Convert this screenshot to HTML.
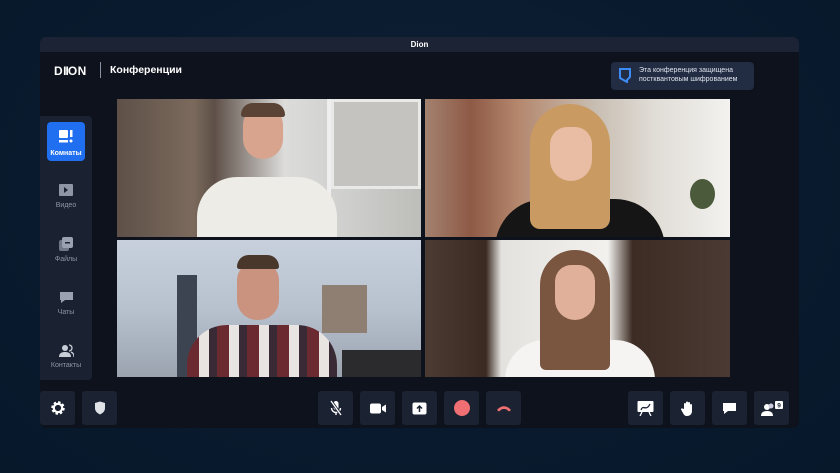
<!DOCTYPE html>
<html><head><meta charset="utf-8"><style>
*{margin:0;padding:0;box-sizing:border-box}
body{width:840px;height:473px;overflow:hidden;background:radial-gradient(ellipse at 50% 40%,#0e2036 0%,#0a1a2e 60%,#07182b 100%);font-family:"Liberation Sans","Noto Sans CJK SC",sans-serif;position:relative}
.win{position:absolute;left:40px;top:37px;width:759px;height:391px;background:#0e121c;border-radius:6px;overflow:hidden}
.title{height:15px;background:#1b2335;color:#fff;font-size:8px;font-weight:bold;text-align:center;line-height:15px}
.a{position:absolute}
.logo{left:14px;top:27px;color:#fff;font-weight:bold;font-size:12px;letter-spacing:0.5px}
.sep{left:60px;top:25px;width:1px;height:16px;background:#8891a0}
.conf{left:70px;top:27px;color:#fff;font-size:10.5px;font-weight:bold}
.badge{left:571px;top:25px;width:143px;height:28px;background:#222c42;border-radius:4px}
.badge span{position:absolute;left:28px;top:5px;color:#dfe5ee;font-size:7px;line-height:8.5px}
.side{left:0;top:79px;width:52px;height:264px;background:#1a2131;border-radius:0 4px 4px 0}
.si{position:absolute;left:0;width:52px;text-align:center;color:#8e96a6;font-size:7px}
.act{left:7px;top:6px;width:38px;height:39px;background:#1f6ff0;border-radius:4px}
.btn{position:absolute;top:354px;width:35px;height:34px;background:#1b2232;border-radius:3px;display:flex;align-items:center;justify-content:center}
.tile{position:absolute;overflow:hidden}
</style></head><body>
<div class="win">
<div class="title">Dion</div>
<div class="a logo">D<span style="letter-spacing:-1px">II</span>ON</div>
<div class="a sep"></div>
<div class="a conf">Конференции</div>
<div class="a badge">
<svg class="a" style="left:8px;top:6px" width="12" height="15" viewBox="0 0 12 15"><path d="M1 1h10v8l-3 3v2L1 10z" fill="none" stroke="#3d8cf5" stroke-width="2"/></svg>
<span>Эта конференция защищена<br>постквантовым шифрованием</span></div>

<div class="a side">
 <div class="a act"><svg class="a" style="left:11px;top:7px" width="16" height="15" viewBox="0 0 16 15"><rect x="1" y="1" width="9" height="8" rx="1" fill="#fff"/><rect x="12" y="1" width="2.5" height="7" fill="#fff"/><rect x="1" y="11" width="9" height="2.5" fill="#fff"/><circle cx="13" cy="12" r="1.5" fill="#fff"/></svg>
 <div style="position:absolute;top:28px;width:38px;text-align:center;color:#fff;font-size:7px;font-weight:bold">Комнаты</div></div>
 <div class="si" style="top:68px"><svg width="14" height="12" viewBox="0 0 14 12"><rect width="14" height="12" rx="1" fill="#8e96a6"/><path d="M5 3l4 3-4 3z" fill="#1a2131"/></svg><div style="margin-top:4px">Видео</div></div>
 <div class="si" style="top:121px"><svg width="14" height="14" viewBox="0 0 14 14"><rect x="0" y="3" width="10" height="11" rx="2" fill="#6f7788"/><rect x="3" y="0" width="11" height="11" rx="2" fill="#9aa2b2"/><rect x="6" y="5" width="5" height="1.5" fill="#1a2131"/></svg><div style="margin-top:3px">Файлы</div></div>
 <div class="si" style="top:175px"><svg width="15" height="13" viewBox="0 0 15 13"><path d="M1 1h13v8H6l-4 3V9H1z" fill="#9aa2b2"/></svg><div style="margin-top:3px">Чаты</div></div>
 <div class="si" style="top:228px"><svg width="15" height="13" viewBox="0 0 15 13"><circle cx="6" cy="4" r="3" fill="#c8ced8"/><path d="M0 13c0-4 3-5 6-5s6 1 6 5z" fill="#c8ced8"/><path d="M10 1a3 3 0 010 6M12 8c2 1 3 2 3 5" stroke="#c8ced8" fill="none" stroke-width="1.3"/></svg><div style="margin-top:3px">Контакты</div></div>
</div>

<div class="tile" style="left:77px;top:62px;width:304px;height:138px;background:linear-gradient(90deg,#5e5048 0%,#7b6a5c 25%,#5e5048 32%,#dcdcda 55%,#cfd0cd 75%,#bdbdba 100%)">
 <div class="a" style="left:210px;top:0;width:4px;height:138px;background:#eee"></div>
 <div class="a" style="left:214px;top:0;width:90px;height:90px;background:#c4c3bf;border:3px solid #e9e9e7"></div>
 <div class="a" style="left:80px;top:78px;width:140px;height:80px;background:#eeece6;border-radius:40px 40px 0 0"></div>
 <div class="a" style="left:126px;top:8px;width:40px;height:52px;background:#d9a48e;border-radius:18px 18px 20px 20px"></div>
 <div class="a" style="left:124px;top:4px;width:44px;height:14px;background:#5a4334;border-radius:20px 20px 4px 4px"></div>
</div>
<div class="tile" style="left:385px;top:62px;width:305px;height:138px;background:linear-gradient(90deg,#a3826f 0%,#8d5a46 15%,#b4866c 30%,#c7bcb0 55%,#e0dcd6 75%,#f3f2ef 100%)">
 <div class="a" style="left:70px;top:100px;width:170px;height:50px;background:#151515;border-radius:50px 50px 0 0"></div>
 <div class="a" style="left:105px;top:5px;width:80px;height:125px;background:#c99a62;border-radius:40px 40px 10px 10px"></div>
 <div class="a" style="left:125px;top:28px;width:42px;height:54px;background:#e9bca4;border-radius:18px 18px 22px 22px"></div>
 <div class="a" style="left:265px;top:80px;width:25px;height:30px;background:#4a5a3a;border-radius:50%"></div>
</div>
<div class="tile" style="left:77px;top:203px;width:304px;height:137px;background:linear-gradient(180deg,#c7d0dc 0%,#b8c2cf 50%,#9aa3ae 100%)">
 <div class="a" style="left:60px;top:35px;width:20px;height:102px;background:#3c4452"></div>
 <div class="a" style="left:205px;top:45px;width:45px;height:48px;background:#8f7f72"></div>
 <div class="a" style="left:225px;top:110px;width:79px;height:27px;background:#2b2b2e"></div>
 <div class="a" style="left:70px;top:85px;width:150px;height:60px;background:repeating-linear-gradient(90deg,#6b2a30 0 12px,#e8e4e2 12px 22px,#3a2a35 22px 30px);border-radius:40px 40px 0 0"></div>
 <div class="a" style="left:120px;top:22px;width:42px;height:58px;background:#c99380;border-radius:18px 18px 20px 20px"></div>
 <div class="a" style="left:120px;top:15px;width:42px;height:14px;background:#4a372c;border-radius:20px 20px 4px 4px"></div>
</div>
<div class="tile" style="left:385px;top:203px;width:305px;height:137px;background:linear-gradient(90deg,#4c3b32 0%,#3a2a22 20%,#e4e2de 25%,#f2f1ee 60%,#3d2c24 68%,#4a3a33 100%)">
 <div class="a" style="left:80px;top:100px;width:150px;height:40px;background:#f5f4f2;border-radius:40px 40px 0 0"></div>
 <div class="a" style="left:115px;top:10px;width:70px;height:120px;background:#7a5540;border-radius:35px 35px 6px 6px"></div>
 <div class="a" style="left:130px;top:25px;width:40px;height:55px;background:#e0b09a;border-radius:18px 18px 22px 22px"></div>
</div>

<div class="btn" style="left:0"><svg width="16" height="16" viewBox="0 0 16 16"><circle cx="8" cy="8" r="5" fill="none" stroke="#fff" stroke-width="3.5" stroke-dasharray="2.2 1.7"/><circle cx="8" cy="8" r="4.2" fill="none" stroke="#fff" stroke-width="2.2"/></svg></div>
<div class="btn" style="left:42px"><svg width="12" height="14" viewBox="0 0 12 14"><path d="M1 2l5-1.5L11 2v5c0 3-2 5-5 6.5C3 12 1 10 1 7z" fill="#dfe3e8"/></svg></div>
<div class="btn" style="left:278px"><svg width="12" height="16" viewBox="0 0 12 16"><rect x="3.5" y="1" width="5" height="9" rx="2.5" fill="#fff"/><path d="M1.5 8a4.5 4.5 0 009 0M6 12.5V15" stroke="#fff" fill="none" stroke-width="1.4"/><path d="M1 1l10 14" stroke="#1b2232" stroke-width="3"/><path d="M1 1l10 14" stroke="#fff" stroke-width="1.3"/></svg></div>
<div class="btn" style="left:320px"><svg width="16" height="11" viewBox="0 0 16 11"><rect x="0" y="0.5" width="11" height="10" rx="2" fill="#fff"/><path d="M12 4l4-2.5v8L12 7z" fill="#fff"/></svg></div>
<div class="btn" style="left:362px"><svg width="15" height="13" viewBox="0 0 15 13"><rect x="0.5" y="0.5" width="14" height="12" rx="2" fill="#fff"/><path d="M7.5 10V4M5 6.5l2.5-2.5 2.5 2.5" stroke="#1b2232" stroke-width="1.5" fill="none"/></svg></div>
<div class="btn" style="left:404px"><div style="width:16px;height:16px;border-radius:50%;background:#ef6f72"></div></div>
<div class="btn" style="left:446px"><svg width="16" height="7" viewBox="0 0 16 7"><path d="M1 5c4-5 10-5 14 0l-2 1.5-2.5-2c-2-.6-3-.6-5 0l-2.5 2z" fill="#ef6f72"/></svg></div>
<div class="btn" style="left:588px"><svg width="17" height="16" viewBox="0 0 17 16"><rect x="0.5" y="1" width="16" height="11" rx="1" fill="#fff"/><path d="M4 10c2-6 5 2 9-6" stroke="#1b2232" stroke-width="1.3" fill="none"/><path d="M5 12l-2 4M12 12l2 4" stroke="#fff" stroke-width="1.3"/></svg></div>
<div class="btn" style="left:630px"><svg width="13" height="15" viewBox="0 0 13 15"><path d="M3 8V3a1 1 0 012 0v4V1.5a1 1 0 012 0V7V2a1 1 0 012 0v5V4a1 1 0 012 0v6c0 3-2 5-5 5-2 0-3-1-4-3L0 8.5a1 1 0 011.5-1z" fill="#fff"/></svg></div>
<div class="btn" style="left:672px"><svg width="15" height="13" viewBox="0 0 15 13"><path d="M1 1h13v8H6l-4 3V9H1z" fill="#fff"/></svg></div>
<div class="btn" style="left:714px"><svg width="22" height="15" viewBox="0 0 22 15"><circle cx="6" cy="6" r="3" fill="#fff"/><path d="M0 15c0-4 3-5 6-5s6 1 6 5z" fill="#fff"/><circle cx="10" cy="5" r="2.5" fill="#ccd"/><rect x="14" y="0" width="8" height="8" rx="1" fill="#fff"/><text x="18" y="6.5" font-size="6.5" font-weight="bold" text-anchor="middle" fill="#1b2232" font-family="Liberation Sans">9</text></svg></div>
</div>
</body></html>
